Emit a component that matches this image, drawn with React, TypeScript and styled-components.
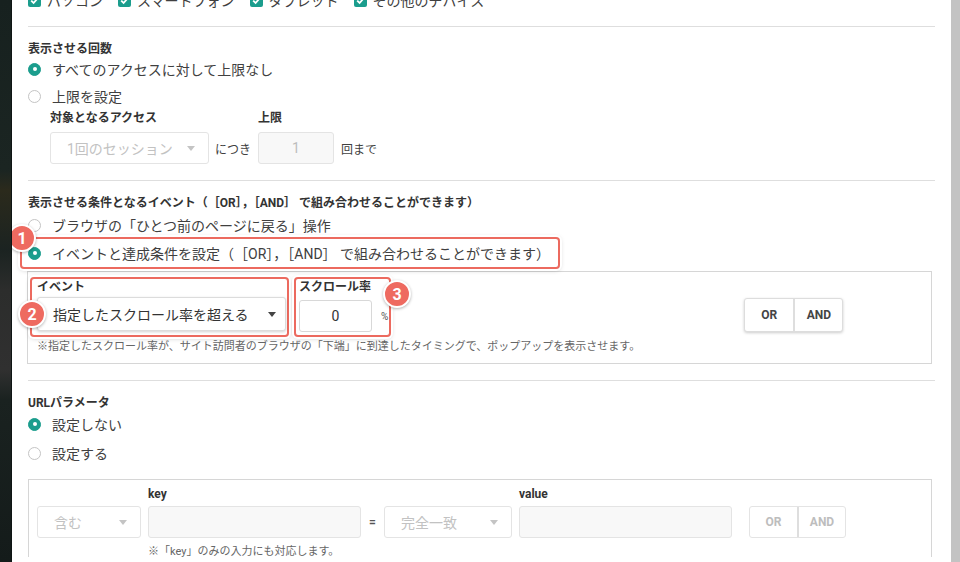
import styled, { createGlobalStyle } from 'styled-components'

const GlobalStyle = createGlobalStyle`
  html, body {
    margin: 0;
    padding: 0;
  }
  body {
    font-family: Roboto, "Noto Sans CJK JP", sans-serif;
    color: #404040;
    background: #fff;
    text-spacing-trim: space-all;
  }
  * {
    box-sizing: border-box;
  }
`

const devices = ['パソコン', 'スマートフォン', 'タブレット', 'その他のデバイス']

const Combine = () => (
  <>
    （［OR<Tight>］，［</Tight>AND］ で組み合わせることができます）
  </>
)

const App = () => {
  return (
    <Screen>
      <GlobalStyle />
      <Backdrop />
      <Panel>
        <DeviceSection>
          <DeviceRow>
            {devices.map((d) => (
              <CheckItem key={d}>
                <CheckBox>
                  <svg width="9" height="9" viewBox="0 0 9 9">
                    <path d="M1.2 4.6 L3.6 7 L7.9 2" fill="none" stroke="#fff" strokeWidth="1.8" />
                  </svg>
                </CheckBox>
                {d}
              </CheckItem>
            ))}
          </DeviceRow>
        </DeviceSection>

        <Section>
          <Title>表示させる回数</Title>
          <RadioRow>
            <Radio $checked />
            すべてのアクセスに対して上限なし
          </RadioRow>
          <RadioRow $gap={5}>
            <Radio />
            上限を設定
          </RadioRow>
          <LimitGrid>
            <SubLabel>対象となるアクセス</SubLabel>
            <span />
            <SubLabel>上限</SubLabel>
            <span />
            <Select $disabled $width={159}>
              1回のセッション
              <Caret $disabled />
            </Select>
            <Inline>につき</Inline>
            <Field $width={76} $disabled $center>
              1
            </Field>
            <Inline>回まで</Inline>
          </LimitGrid>
        </Section>

        <Section>
          <Title>
            表示させる条件となるイベント
            <Combine />
          </Title>
          <RadioRow $gap={2}>
            <Radio />
            ブラウザの「ひとつ前のページに戻る」操作
          </RadioRow>
          <HighlightRow>
            <Badge $left={-14} $top={-15}>1</Badge>
            <Radio $checked />
            <span>
              イベントと達成条件を設定
              <Combine />
            </span>
          </HighlightRow>
          <EventBox>
            <EventRow>
              <EventFrame>
                <Badge $left={-14} $top={21}>2</Badge>
                <SubLabel>イベント</SubLabel>
                <Select $width={249} $raised>
                  指定したスクロール率を超える
                  <Caret />
                </Select>
              </EventFrame>
              <RateFrame>
                <Badge $left={87} $top={1}>3</Badge>
                <SubLabel>スクロール率</SubLabel>
                <RateLine>
                  <Field $width={73} $center>
                    0
                  </Field>
                  <Percent>%</Percent>
                </RateLine>
              </RateFrame>
              <ButtonGroup $offset={348}>
                <ToggleButton $width={48}>OR</ToggleButton>
                <ToggleButton $width={49}>AND</ToggleButton>
              </ButtonGroup>
            </EventRow>
            <Note>
              ※指定したスクロール率が、サイト訪問者のブラウザの「下端」に到達したタイミングで、ポップアップを表示させます。
            </Note>
          </EventBox>
        </Section>

        <Section $last>
          <Title>URLパラメータ</Title>
          <RadioRow $gap={1}>
            <Radio $checked />
            設定しない
          </RadioRow>
          <RadioRow $gap={7}>
            <Radio />
            設定する
          </RadioRow>
          <ParamBox>
            <span />
            <SubLabel>key</SubLabel>
            <span />
            <span />
            <SubLabel>value</SubLabel>
            <span />

            <Select $disabled $width={104}>
              含む
              <Caret $disabled />
            </Select>
            <Field $width={213} $disabled />
            <Equals>=</Equals>
            <Select $disabled $width={128}>
              完全一致
              <Caret $disabled />
            </Select>
            <Field $width={213} $disabled />
            <ButtonGroup $flat>
              <ToggleButton $width={47} $disabled>OR</ToggleButton>
              <ToggleButton $width={48} $disabled>AND</ToggleButton>
            </ButtonGroup>

            <span />
            <ParamNote>※「key」のみの入力にも対応します。</ParamNote>
          </ParamBox>
        </Section>
      </Panel>
      <Scrollbar />
    </Screen>
  )
}

const Screen = styled.div`
  display: flex;
  width: 960px;
  height: 562px;
  overflow: hidden;
`
const Backdrop = styled.div`
  width: 12px;
  flex-shrink: 0;
  background: linear-gradient(
    180deg,
    #17211f 0px,
    #1b2522 170px,
    #2b2a1c 190px,
    #1b2321 250px,
    #2c2d2c 290px,
    #303030 370px,
    #1a2220 400px,
    #141b1a 562px
  );
  border-right: 1px solid #0f1514;
`
const Panel = styled.div`
  flex: 1;
  background: #fff;
  padding: 0 16px;
  overflow: hidden;
`
const Scrollbar = styled.div`
  width: 9px;
  flex-shrink: 0;
  background: #c3c3c3;
`
const Tight = styled.span`
  text-spacing-trim: normal;
`
const Section = styled.div<{ $last?: boolean }>`
  padding: 13px 0 16px;
  border-bottom: ${(p) => (p.$last ? 'none' : '1px solid #dedede')};
`
const DeviceSection = styled.div`
  margin-top: -10px;
  padding-bottom: 16px;
  border-bottom: 1px solid #dedede;
`
const DeviceRow = styled.div`
  display: flex;
  gap: 15px;
  height: 20px;
`
const CheckItem = styled.div`
  display: flex;
  align-items: center;
  gap: 6px;
  font-size: 14px;
`
const CheckBox = styled.span`
  display: flex;
  align-items: center;
  justify-content: center;
  width: 13px;
  height: 13px;
  border-radius: 2px;
  background: #1b9d8d;
`
const Title = styled.div`
  height: 18px;
  line-height: 18px;
  font-size: 12px;
  font-weight: 700;
  color: #333;
  white-space: nowrap;
`
const RadioRow = styled.div<{ $gap?: number }>`
  display: flex;
  align-items: center;
  gap: 11px;
  height: 22px;
  margin-top: ${(p) => p.$gap ?? 0}px;
  font-size: 14px;
`
const Radio = styled.span<{ $checked?: boolean }>`
  position: relative;
  width: 13px;
  height: 13px;
  border-radius: 50%;
  flex-shrink: 0;
  background: ${(p) => (p.$checked ? '#1b9d8d' : '#fff')};
  border: 1px solid ${(p) => (p.$checked ? '#1b9d8d' : '#c4c4c4')};
  &::after {
    content: '';
    display: ${(p) => (p.$checked ? 'block' : 'none')};
    position: absolute;
    left: 50%;
    top: 50%;
    width: 4px;
    height: 4px;
    margin: -2px 0 0 -2px;
    border-radius: 50%;
    background: #fff;
  }
`
const LimitGrid = styled.div`
  display: grid;
  grid-template-columns: 165px 43px 83px auto;
  grid-template-rows: 16px 32px;
  row-gap: 6px;
  align-items: center;
  margin: 3px 0 0 22px;
`
const SubLabel = styled.div`
  height: 17px;
  line-height: 17px;
  font-size: 12px;
  font-weight: 700;
  color: #333;
`
const Inline = styled.span`
  font-size: 12px;
`
const Select = styled.div<{ $width: number; $disabled?: boolean; $raised?: boolean }>`
  display: flex;
  align-items: center;
  justify-content: space-between;
  width: ${(p) => p.$width}px;
  height: ${(p) => (p.$raised ? 34 : 32)}px;
  padding: 0 ${(p) => (p.$raised ? 9 : 13)}px 0 ${(p) => (p.$raised ? 15 : 16)}px;
  border: 1px solid ${(p) => (p.$disabled ? '#e4e4e4' : '#dcdcdc')};
  border-radius: 3px;
  background: #fff;
  font-size: 14px;
  color: ${(p) => (p.$disabled ? '#c2c2c2' : '#333')};
  box-shadow: ${(p) => (p.$raised ? '0 1px 3px rgba(0, 0, 0, 0.18)' : 'none')};
  white-space: nowrap;
`
const Caret = styled.span<{ $disabled?: boolean }>`
  width: 0;
  height: 0;
  border-left: 4.5px solid transparent;
  border-right: 4.5px solid transparent;
  border-top: 5px solid ${(p) => (p.$disabled ? '#c4c4c4' : '#444')};
`
const Field = styled.div<{ $width: number; $disabled?: boolean; $center?: boolean }>`
  display: flex;
  align-items: center;
  justify-content: ${(p) => (p.$center ? 'center' : 'flex-start')};
  width: ${(p) => p.$width}px;
  height: 32px;
  border: 1px solid ${(p) => (p.$disabled ? '#e4e4e4' : '#d8d8d8')};
  border-radius: 3px;
  background: ${(p) => (p.$disabled ? '#f8f8f8' : '#fff')};
  font-size: 14px;
  color: ${(p) => (p.$disabled ? '#bdbdbd' : '#333')};
`
const Frame = styled.div`
  position: relative;
  border: 2px solid #ec6a5f;
  border-radius: 4px;
  box-shadow: 0 0 0 2px #fff, 0 1px 5px rgba(0, 0, 0, 0.25);
`
const HighlightRow = styled(Frame)`
  display: flex;
  align-items: center;
  gap: 11px;
  width: fit-content;
  height: 32px;
  margin: 1px 0 0 -8px;
  padding: 0 8px 0 6px;
  font-size: 14px;
  white-space: nowrap;
`
const Badge = styled.span<{ $left: number; $top: number }>`
  position: absolute;
  left: ${(p) => p.$left}px;
  top: ${(p) => p.$top}px;
  z-index: 2;
  display: flex;
  align-items: center;
  justify-content: center;
  width: 28px;
  height: 28px;
  border-radius: 50%;
  border: 2px solid #fff;
  background: #ee6a60;
  color: #fff;
  font-family: Roboto, sans-serif;
  font-size: 16px;
  font-weight: 700;
  box-shadow: 0 1px 3px rgba(0, 0, 0, 0.3);
`
const EventBox = styled.div`
  margin: 2px 3px 0 -1px;
  padding: 5px 0 9px 2px;
  border: 1px solid #d6d6d6;
`
const EventRow = styled.div`
  display: flex;
  align-items: flex-start;
  gap: 5px;
`
const EventFrame = styled(Frame)`
  padding: 0 1px 4px 5px;
  ${Select} {
    margin-top: 1px;
  }
`
const RateFrame = styled(Frame)`
  padding: 0 1px 3px 3px;
`
const RateLine = styled.div`
  display: flex;
  align-items: center;
  gap: 9px;
  margin-top: 4px;
`
const Percent = styled.span`
  font-size: 10px;
  color: #555;
`
const ButtonGroup = styled.div<{ $offset?: number; $flat?: boolean }>`
  display: flex;
  justify-self: start;
  margin-left: ${(p) => p.$offset ?? 0}px;
  margin-top: ${(p) => (p.$offset ? 21 : 0)}px;
  border: 1px solid ${(p) => (p.$flat ? '#e4e4e4' : '#dddddd')};
  border-radius: 3px;
  background: #fff;
  box-shadow: ${(p) => (p.$flat ? 'none' : '0 1px 3px rgba(0, 0, 0, 0.2)')};
  overflow: hidden;
`
const ToggleButton = styled.div<{ $width: number; $disabled?: boolean }>`
  display: flex;
  align-items: center;
  justify-content: center;
  width: ${(p) => p.$width}px;
  height: ${(p) => (p.$disabled ? 30 : 32)}px;
  font-size: 12px;
  font-weight: 700;
  color: ${(p) => (p.$disabled ? '#bdbdbd' : '#444')};
  & + & {
    border-left: ${(p) => (p.$disabled ? 2 : 1)}px solid #dedede;
  }
`
const Note = styled.div`
  height: 14px;
  line-height: 14px;
  margin: 3px 0 0 7px;
  font-size: 11px;
  color: #666;
  white-space: nowrap;
`
const ParamBox = styled.div`
  display: grid;
  grid-template-columns: 111px 213px 23px 135px 230px auto;
  grid-template-rows: 14px 32px 14px;
  row-gap: 5px;
  align-items: center;
  margin: 15px 3px 0 0;
  padding: 7px 0 0 8px;
  border: 1px solid #d6d6d6;
  border-bottom: none;
  ${SubLabel} {
    height: 14px;
    line-height: 14px;
  }
`
const Equals = styled.span`
  justify-self: center;
  font-size: 12px;
  font-weight: 700;
  color: #555;
`
const ParamNote = styled.div`
  grid-column: 2 / span 4;
  margin-top: 4px;
  font-size: 11px;
  line-height: 14px;
  color: #666;
`

export default App
